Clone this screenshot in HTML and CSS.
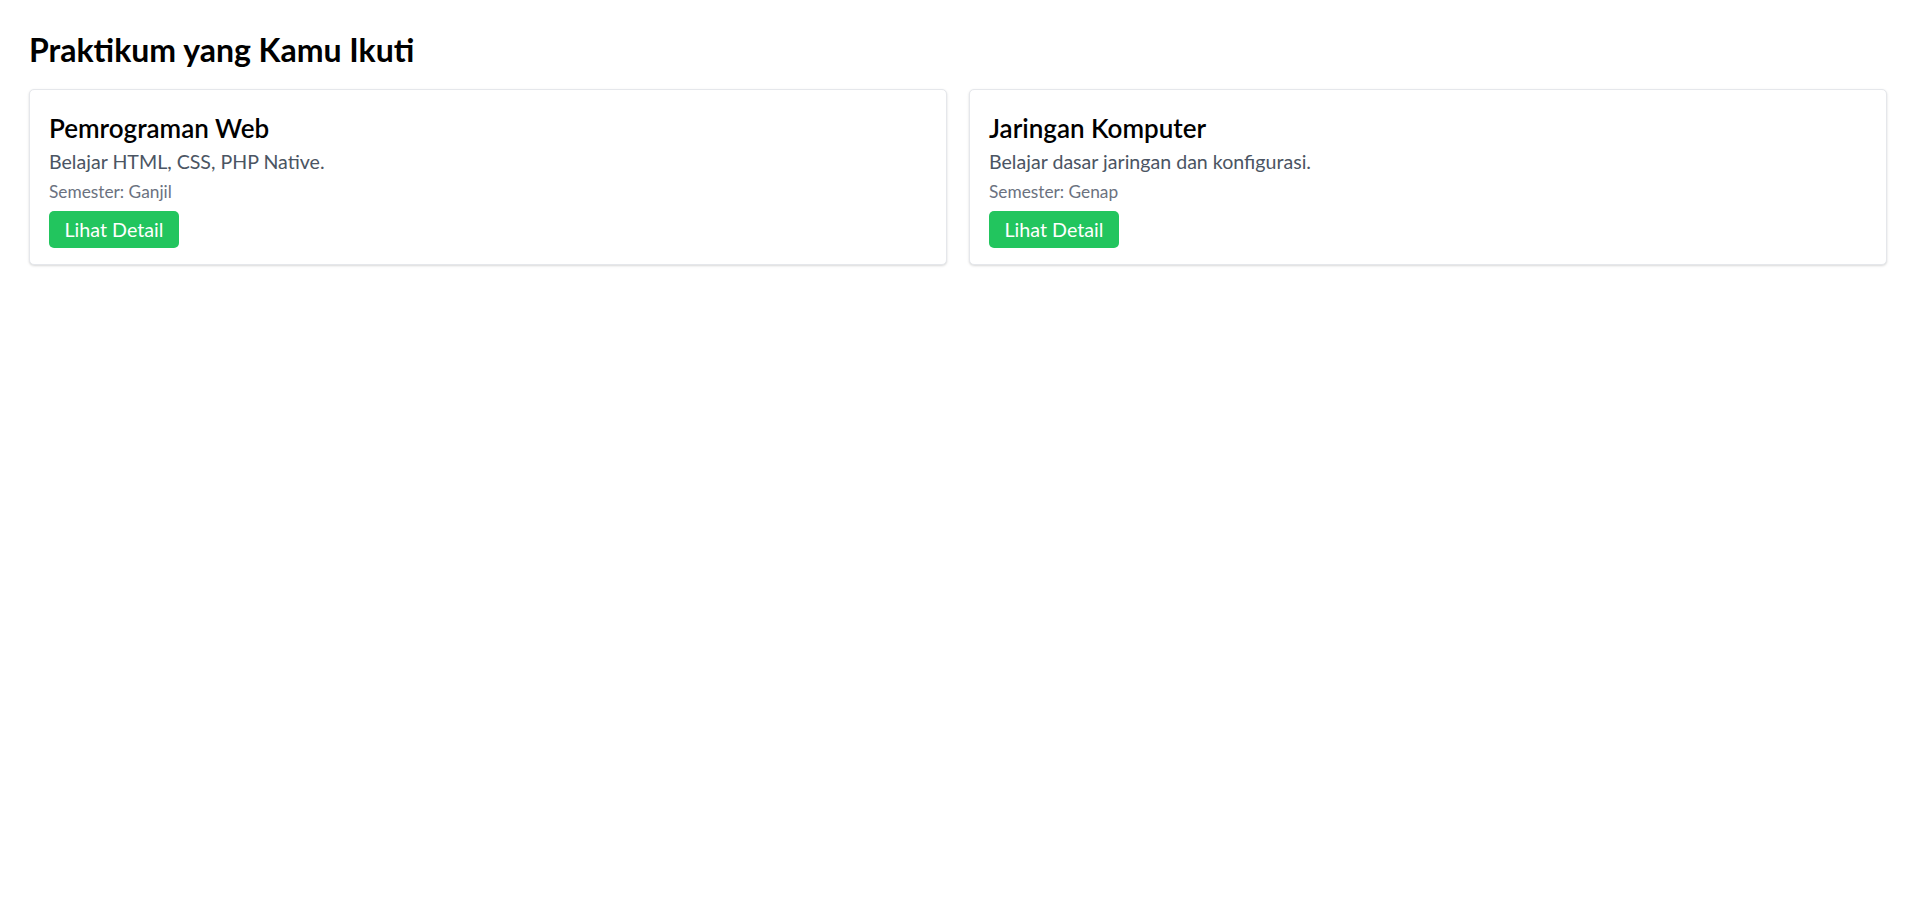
FILE: index.html
```html
<!DOCTYPE html>
<html lang="id">
<head>
<meta charset="utf-8">
<title>Praktikum yang Kamu Ikuti</title>
<link rel="stylesheet" href="styles.css">
</head>
<body>
<main class="page">
  <h1 class="page-title">Praktikum yang Kamu Ikuti</h1>
  <div class="grid">
    <div class="card">
      <h2 class="card-title">Pemrograman Web</h2>
      <p class="card-desc">Belajar HTML, CSS, PHP Native.</p>
      <p class="card-meta">Semester: Ganjil</p>
      <a class="btn" href="#">Lihat Detail</a>
    </div>
    <div class="card">
      <h2 class="card-title">Jaringan Komputer</h2>
      <p class="card-desc">Belajar dasar jaringan dan konfigurasi.</p>
      <p class="card-meta">Semester: Genap</p>
      <a class="btn" href="#">Lihat Detail</a>
    </div>
  </div>
</main>
</body>
</html>
```

FILE: styles.css
```css
* { box-sizing: border-box; }
html, body { margin: 0; padding: 0; background: #ffffff; }
body {
  font-family: "Lato", "Open Sans", sans-serif;
  color: #000;
}
.page {
  padding: 29px 29px;
}
.page-title {
  margin: 0 0 18px 0;
  font-size: 32px;
  line-height: 42px;
  font-weight: 700;
  color: #000;
}
.grid {
  display: grid;
  grid-template-columns: 1fr 1fr;
  gap: 22px;
}
.card {
  background: #fff;
  border: 1px solid #e5e7eb;
  border-radius: 5px;
  box-shadow: 0 1px 3px rgba(0,0,0,0.10), 0 1px 2px rgba(0,0,0,0.06);
  padding: 20px 19px 16px 19px;
}
.card-title {
  margin: 0;
  font-size: 26px;
  line-height: 36px;
  font-weight: 600;
  color: #000;
}
.card-desc {
  margin: 0;
  font-size: 19.6px;
  line-height: 31.5px;
  color: #4b5563;
}
.card-meta {
  margin: 0 0 5.3px 0;
  font-size: 17.3px;
  line-height: 28.2px;
  color: #6b7280;
}
.btn {
  display: inline-block;
  vertical-align: top;
  background: #22c55e;
  color: #fff;
  text-decoration: none;
  font-size: 19.7px;
  line-height: 37px;
  height: 37px;
  padding: 0 15.5px;
  border-radius: 5px;
}
```
